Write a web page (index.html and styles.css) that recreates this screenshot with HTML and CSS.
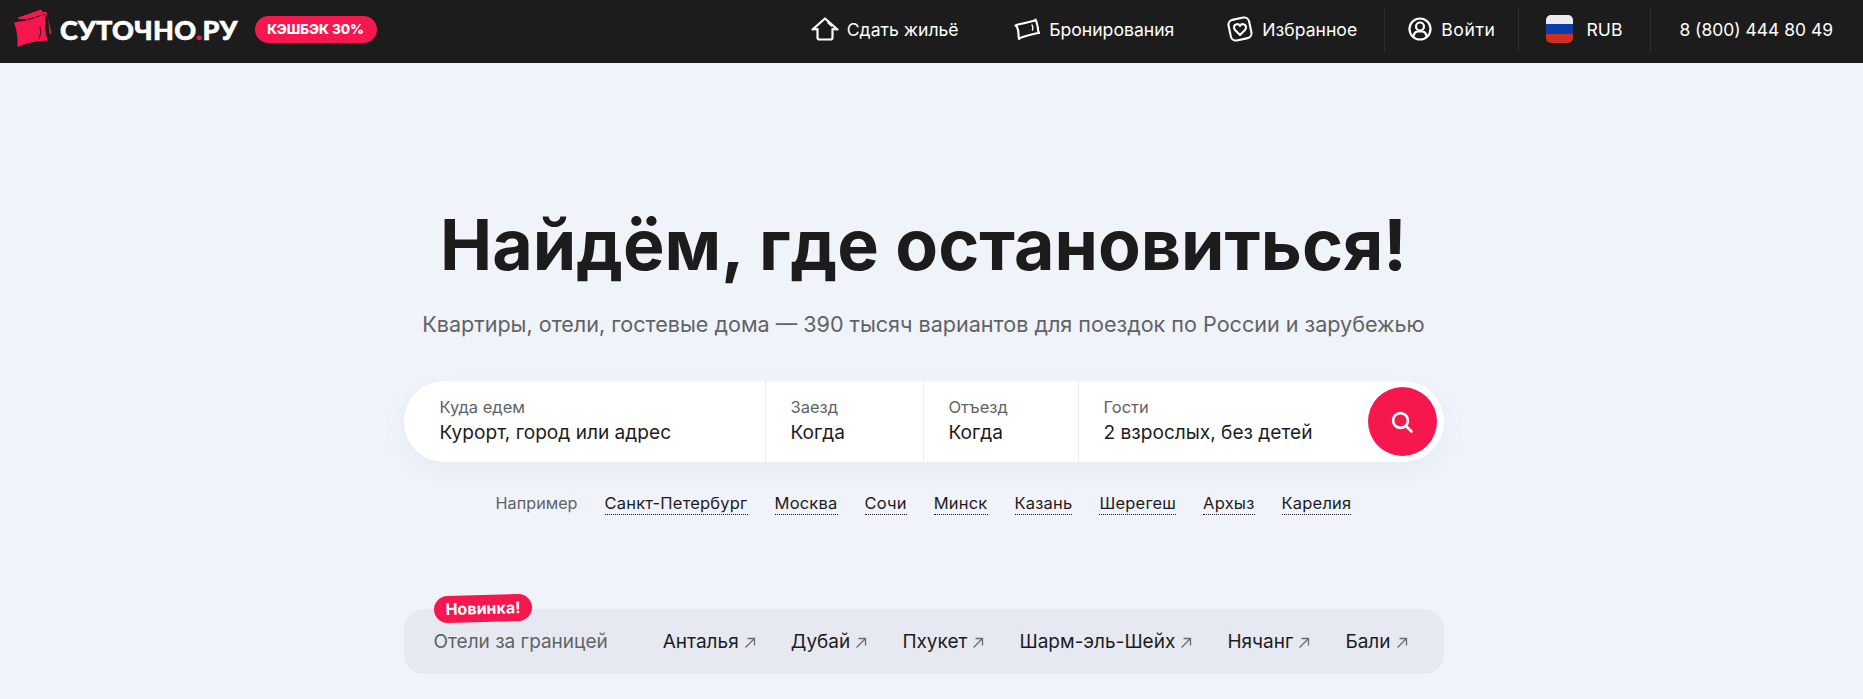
FILE: index.html
```html
<!DOCTYPE html>
<html lang="ru">
<head>
<meta charset="utf-8">
<title>Суточно.ру</title>
<link rel="stylesheet" href="styles.css">
</head>
<body>
<header class="topbar">
  <a class="logo" href="#">
    <svg class="logo-mark" viewBox="0 0 40 40" width="40" height="40">
      <path d="M6 9 L29 1 L31 4 L34 3 L39 24 L37 25 L15 10 Z" fill="#f5174d" stroke="#f5174d" stroke-width="1" stroke-linejoin="round"/>
      <path d="M2 14 L33 5 L36 8 L38 30 L36 31 L7 38 L5 36 Z" fill="#1c1c1c"/>
      <path d="M3 14 Q18 13 33 6 Q31 20 35 31 Q20 31 6 37 Q7 25 3 14 Z" fill="#f5174d" stroke="#f5174d" stroke-width="1.5" stroke-linejoin="round"/>
      <path d="M28 18 Q30 24 27 30" fill="none" stroke="#1c1c1c" stroke-width="1"/>
    </svg>
    <span class="logo-text">СУТОЧНО<span class="logo-dot">.</span>РУ</span>
  </a>
  <span class="cashback">КЭШБЭК 30%</span>
  <nav class="nav">
    <a class="nav-item nav-rent" href="#">
      <svg class="nav-icon" viewBox="0 0 28 24" width="28" height="24" fill="none" stroke="#fff" stroke-width="2.2" stroke-linejoin="round" stroke-linecap="round">
        <path d="M6.5 12 L1.5 12.5 L14 1.5 L26.5 12.5 L21.5 12 L21.5 20.5 Q21.5 22.5 19.5 22.5 L8.5 22.5 Q6.5 22.5 6.5 20.5 Z"/>
        <path d="M17 6 L20.5 9" stroke-width="1.4"/>
      </svg>
      <span>Сдать жильё</span>
    </a>
    <a class="nav-item nav-bookings" href="#">
      <svg class="nav-icon" viewBox="0 0 26 22" width="26" height="22" fill="none" stroke="#fff" stroke-width="2.1" stroke-linejoin="round" stroke-linecap="round">
        <path d="M1.5 7.5 Q3 7 4 6.5 Q12 5 20 2.8 L21.5 1.5 L22.5 4 Q24 9 24.2 13 L25 15 L22.8 15.3 Q14 17 7.2 19.5 L5 21 L4.6 18.8 Q4.8 13 3 9 Z"/>
        <path d="M18 7 Q19.5 9 18.5 12" stroke-width="1.4"/>
      </svg>
      <span>Бронирования</span>
    </a>
    <a class="nav-item nav-favs" href="#">
      <svg class="nav-icon" viewBox="0 0 28 28" width="28" height="28" fill="none" stroke="#fff" stroke-width="2.1" stroke-linejoin="round">
        <rect x="3.5" y="3.5" width="21" height="21" rx="5" transform="rotate(-12 14 14)"/>
        <path d="M14 20 L9 15 C7 12.5 8 9.5 10.8 9.2 C12.5 9 13.5 10 14 11 C14.5 10 15.5 9 17.2 9.2 C20 9.5 21 12.5 19 15 Z"/>
      </svg>
      <span>Избранное</span>
    </a>
    <span class="nav-sep"></span>
    <a class="nav-item nav-login" href="#">
      <svg class="nav-icon" viewBox="0 0 24 24" width="24" height="24" fill="none" stroke="#fff" stroke-width="2.2">
        <circle cx="12" cy="12" r="10.5"/>
        <circle cx="12" cy="9.5" r="4"/>
        <path d="M5.5 19.5 Q6 15 9.5 14.5 L14.5 14.5 Q18 15 18.5 19.5"/>
      </svg>
      <span class="login-text">Войти</span>
    </a>
    <span class="nav-sep"></span>
    <a class="nav-item nav-currency" href="#">
      <span class="flag"><i class="stripe-white"></i><i class="stripe-blue"></i><i class="stripe-red"></i></span>
      <span>RUB</span>
    </a>
    <span class="nav-sep"></span>
    <a class="nav-phone" href="#">8 (800) 444 80 49</a>
  </nav>
</header>

<main class="hero">
  <h1 class="title">Найдём, где остановиться!</h1>
  <p class="subtitle">Квартиры, отели, гостевые дома — 390 тысяч вариантов для поездок по России и зарубежью</p>

  <form class="search">
    <div class="field field-where"><span class="field-label">Куда едем</span><span class="field-value">Курорт, город или адрес</span></div>
    <div class="field field-in"><span class="field-label">Заезд</span><span class="field-value">Когда</span></div>
    <div class="field field-out"><span class="field-label">Отъезд</span><span class="field-value">Когда</span></div>
    <div class="field field-guests"><span class="field-label">Гости</span><span class="field-value">2 взрослых, без детей</span></div>
    <button class="search-btn" type="button" aria-label="Найти">
      <svg viewBox="0 0 24 24" width="24" height="24" fill="none" stroke="#fff" stroke-width="2.6" stroke-linecap="round"><circle cx="10.5" cy="10.5" r="7.4"/><path d="M16 16 L21.5 21.5"/></svg>
    </button>
  </form>

  <div class="examples">
    <span class="examples-label">Например</span>
    <a class="example" href="#">Санкт-Петербург</a>
    <a class="example" href="#">Москва</a>
    <a class="example" href="#">Сочи</a>
    <a class="example" href="#">Минск</a>
    <a class="example" href="#">Казань</a>
    <a class="example" href="#">Шерегеш</a>
    <a class="example" href="#">Архыз</a>
    <a class="example" href="#">Карелия</a>
  </div>

  <section class="abroad">
    <span class="badge">Новинка!</span>
    <span class="abroad-label">Отели за границей</span>
    <div class="abroad-links">
      <a class="abroad-link" href="#">Анталья <svg class="arrow" viewBox="0 0 12 12" width="12" height="12"><path d="M1.5 10.5 L10.5 1.5 M3.5 1.5 L10.5 1.5 L10.5 8.5"/></svg></a>
      <a class="abroad-link" href="#">Дубай <svg class="arrow" viewBox="0 0 12 12" width="12" height="12"><path d="M1.5 10.5 L10.5 1.5 M3.5 1.5 L10.5 1.5 L10.5 8.5"/></svg></a>
      <a class="abroad-link" href="#">Пхукет <svg class="arrow" viewBox="0 0 12 12" width="12" height="12"><path d="M1.5 10.5 L10.5 1.5 M3.5 1.5 L10.5 1.5 L10.5 8.5"/></svg></a>
      <a class="abroad-link" href="#">Шарм-эль-Шейх <svg class="arrow" viewBox="0 0 12 12" width="12" height="12"><path d="M1.5 10.5 L10.5 1.5 M3.5 1.5 L10.5 1.5 L10.5 8.5"/></svg></a>
      <a class="abroad-link" href="#">Нячанг <svg class="arrow" viewBox="0 0 12 12" width="12" height="12"><path d="M1.5 10.5 L10.5 1.5 M3.5 1.5 L10.5 1.5 L10.5 8.5"/></svg></a>
      <a class="abroad-link" href="#">Бали <svg class="arrow" viewBox="0 0 12 12" width="12" height="12"><path d="M1.5 10.5 L10.5 1.5 M3.5 1.5 L10.5 1.5 L10.5 8.5"/></svg></a>
    </div>
  </section>
</main>
</body>
</html>
```
FILE: styles.css
```css
* { box-sizing: border-box; }
html, body { margin: 0; padding: 0; }
body {
  background: #f0f3fa;
  color: #1c1c1c;
  font-family: Inter, "Liberation Sans", sans-serif;
  overflow: hidden;
  height: 699px;
}
a { color: inherit; text-decoration: none; }

.topbar {
  display: flex;
  align-items: center;
  height: 63px;
  padding: 0 30px 5px 12px;
  background: #1c1c1c;
  color: #fff;
}
.logo { display: flex; align-items: center; gap: 8px; }
.logo-mark { display: block; }
.logo-text {
  font-family: Lato, Inter, sans-serif;
  font-weight: 900;
  font-size: 27px;
  line-height: 1;
  letter-spacing: 0.3px;
  -webkit-text-stroke: 0.6px #fff;
}
.logo-dot { color: #f5174d; -webkit-text-stroke-color: #f5174d; }
.cashback {
  display: flex;
  align-items: center;
  height: 27px;
  margin-left: 17px;
  padding: 0 12.5px;
  border-radius: 14px;
  background: #f5174d;
  font-size: 13.5px;
  font-weight: 800;
}
.nav { display: flex; align-items: center; margin-left: auto; height: 100%; font-size: 17.6px; }
.nav-item { display: flex; align-items: center; gap: 9px; }
.nav-icon { display: block; flex: none; }
.nav-rent { gap: 8px; }
.nav-bookings { margin-left: 55.5px; }
.nav-favs { margin-left: 52px; margin-right: 27px; gap: 8px; }
.nav-sep { width: 1px; height: 45px; background: #2d2d2d; }
.nav-login { margin: 0 23px; }
.login-text { letter-spacing: 0.6px; }
.nav-currency { margin: 0 28px 0 27px; gap: 13px; }
.flag {
  display: flex;
  flex-direction: column;
  width: 27px;
  height: 28px;
  border-radius: 5px;
  overflow: hidden;
}
.flag i { display: block; flex: 1; }
.stripe-white { background: #ececf0; }
.stripe-blue { background: #0b3ea8; }
.stripe-red { background: #d12e22; }
.nav-phone { white-space: nowrap; margin-left: 28px; font-size: 17.45px; }

.hero { display: flex; flex-direction: column; align-items: center; padding-right: 16px; }
.title {
  margin: 138px 0 0;
  font-size: 69.85px;
  line-height: 88px;
  font-weight: 700;
}
.subtitle {
  margin: 19px 0 0;
  font-size: 21.55px;
  line-height: 32px;
  color: #5f6368;
}

.search {
  display: flex;
  align-items: stretch;
  position: relative;
  width: 1040px;
  height: 81px;
  margin-top: 41px;
  border-radius: 41px;
  background: #fff;
  box-shadow: 0 8px 24px rgba(120, 135, 190, 0.08);
}
.field {
  display: flex;
  flex-direction: column;
  justify-content: center;
  padding: 0 0 2px 25px;
  border-right: 1px solid #ebedf2;
}
.field-where { width: 362px; padding-left: 36px; }
.field-in { width: 158px; }
.field-out { width: 155px; }
.field-guests { flex: 1; border-right: 0; }
.field-label { font-size: 16.5px; line-height: 22px; color: #5f6368; }
.field-value { font-size: 19.1px; line-height: 28px; }
.search-btn {
  flex: none;
  align-self: center;
  display: flex;
  align-items: center;
  justify-content: center;
  width: 69px;
  height: 69px;
  margin-right: 7px;
  padding: 0;
  border: 0;
  border-radius: 50%;
  background: #f5174d;
}

.examples {
  display: flex;
  align-items: center;
  gap: 27px;
  margin-top: 29px;
  font-size: 16px;
  line-height: 24px;
}
.examples-label { color: #5f6368; font-size: 16.2px; }
.example { border-bottom: 1px dotted #1c1c1c; line-height: 22px; font-size: 16.5px; letter-spacing: 0.2px; }

.abroad {
  position: relative;
  display: flex;
  align-items: center;
  width: 1040px;
  height: 65px;
  margin-top: 94px;
  padding: 0 36px 0 30px;
  border-radius: 20px;
  background: #e7e9f2;
  font-size: 19px;
}
.badge {
  position: absolute;
  left: 30px;
  top: -14px;
  padding: 3px 11.5px;
  border-radius: 14px;
  background: #f5174d;
  color: #fff;
  font-size: 16px;
  line-height: 21px;
  font-weight: 700;
  transform: rotate(-1.5deg);
}
.abroad-label { color: #5f6368; }
.abroad-links { display: flex; justify-content: space-between; flex: 1; margin-left: 55px; }
.abroad-link { display: flex; align-items: center; gap: 5px; white-space: nowrap; }
.arrow { fill: none; stroke: #6a6d75; stroke-width: 1.3; margin-top: 2px; }
```
